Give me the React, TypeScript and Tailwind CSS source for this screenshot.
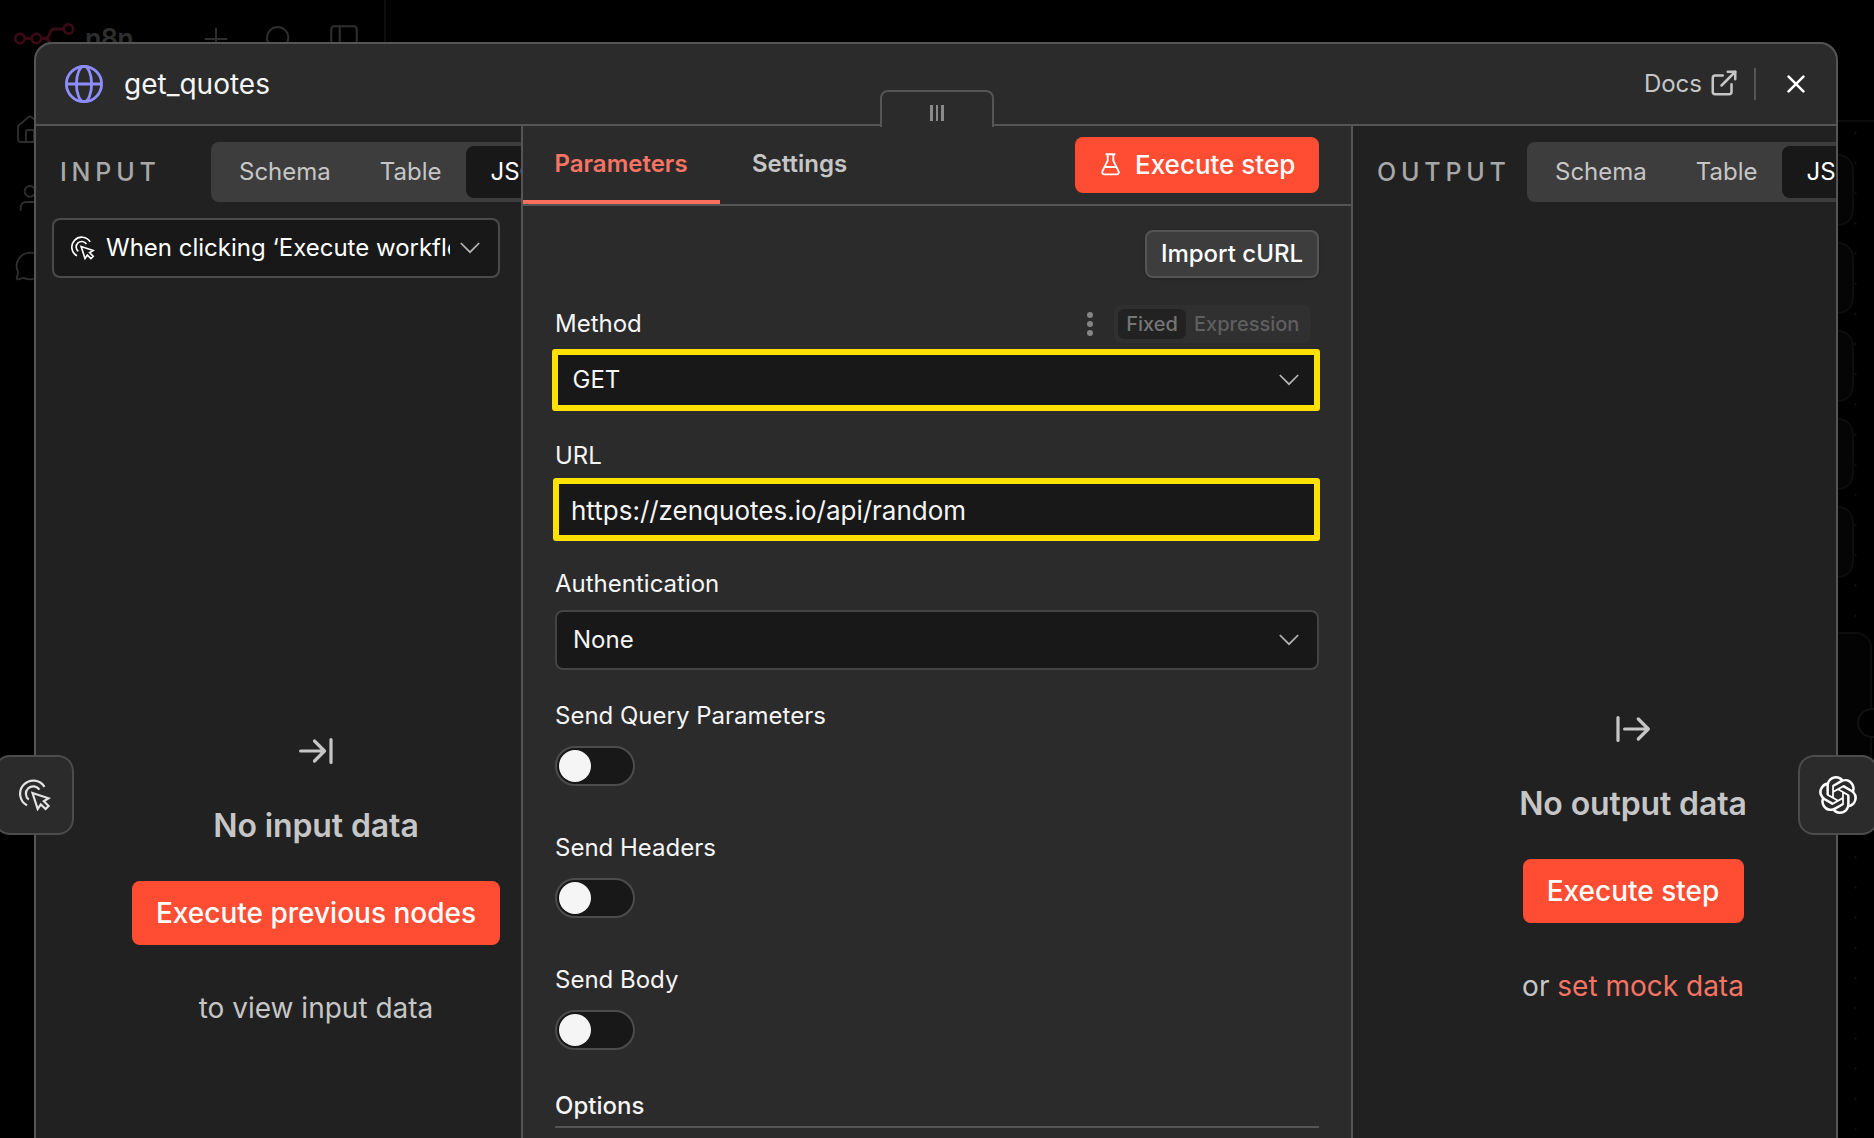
import type { ReactNode } from "react";
import { ExternalLink, House, MessageCircle, PanelLeft, Plus, Search, User } from "lucide-react";
import { SiOpenai } from "react-icons/si";

const canvasNodes = ["a", "b", "c", "d", "e"];

const switches = ["Send Query Parameters", "Send Headers", "Send Body"];

function ClickIcon({ className }: { className?: string }) {
  return (
    <svg viewBox="0 0 32 32" fill="none" stroke="currentColor" strokeWidth="2.2" className={className}>
      <path d="M8 26.4A13.2 13.2 0 1 1 25.5 7.8" />
      <path d="M9.8 20.6A7.4 7.4 0 1 1 20.5 10.7" />
      <path d="M13.5 14L29.6 19.3L24.8 22.3L29.6 27L26.6 30L21.8 25.4L18.7 30Z" />
    </svg>
  );
}

function GlobeIcon() {
  return (
    <svg viewBox="0 0 38 38" fill="none" stroke="#8d8dff" strokeWidth="2.8" className="h-[38px] w-[38px]">
      <circle cx="19" cy="19" r="17.6" />
      <ellipse cx="19" cy="19" rx="7.6" ry="17.6" />
      <path d="M1.4 19h35.2" />
    </svg>
  );
}

function ChevronIcon() {
  return (
    <svg viewBox="0 0 20 12" fill="none" stroke="#b5b5b5" strokeWidth="1.7" className="h-3 w-5 shrink-0">
      <path d="M.8 1L10 10.2L19.2 1" />
    </svg>
  );
}

function FlaskIcon() {
  return (
    <svg viewBox="0 0 19 23" fill="none" stroke="white" strokeWidth="1.9" className="h-[23px] w-[19px]">
      <path d="M6.7 1v6.6L1.6 17.8C.6 19.9 1.7 21.4 3.6 21.4h11.8c1.9 0 3-1.5 2-3.6L12.3 7.6V1M4.6 1.2h9.8M3.8 14h11.4" />
    </svg>
  );
}

function ArrowIcon({ direction }: { direction: "in" | "out" }) {
  return (
    <svg viewBox="0 0 34 26" fill="none" stroke="#c6c6c6" strokeWidth="3.2" strokeLinecap="round" strokeLinejoin="round" className="h-[26px] w-[34px]">
      {direction === "in" ? (
        <path d="M1.6 13h24M15.5 3l10 10l-10 10M32 1.6v22.8" />
      ) : (
        <path d="M8.6 13h23.6M22.3 3l10 10l-10 10M2 1.6v22.8" />
      )}
    </svg>
  );
}

function Logo() {
  return (
    <svg viewBox="0 0 62 34" fill="none" stroke="#3b0a17" strokeWidth="2.8" className="h-[34px] w-[62px]">
      <circle cx="6" cy="16.5" r="4.7" />
      <circle cx="22.5" cy="16.5" r="4.7" />
      <circle cx="54.5" cy="7" r="4.7" />
      <circle cx="47.5" cy="26" r="4.7" />
      <path d="M10.7 16.5h7M27.2 16.5h4c6 0 3-9.5 9-9.5h9.5M31.2 16.5c6 0 4 9.5 11.5 9.5" />
    </svg>
  );
}

function Background() {
  return (
    <div className="flex h-full w-full text-[#2e2e2e]">
      <aside className="h-full w-[386px] shrink-0 border-r-2 border-[#0d0d0d]">
        <div className="flex items-center pt-[21px] pl-[14px]">
          <Logo />
          <span className="ml-[9px] w-[110px] text-[27px] leading-[34px] font-semibold tracking-[-0.8px]">n8n</span>
          <Plus size={36} strokeWidth={1.4} className="mr-[29px] ml-[3px]" />
          <Search size={32} strokeWidth={1.5} className="mr-[32px]" />
          <PanelLeft size={34} strokeWidth={1.5} />
        </div>
        <div className="flex flex-col gap-9 pt-[57px] pl-[14px]">
          <House size={32} strokeWidth={1.4} />
          <User size={32} strokeWidth={1.4} />
          <MessageCircle size={32} strokeWidth={1.4} />
        </div>
      </aside>
      <main className="flex-1 bg-[radial-gradient(#101010_1px,transparent_1px)] bg-[size:30.2px_30.2px] bg-[position:5.3px_27.1px]">
        <div className="h-[122px] border-b-2 border-[#0b0b0b] bg-black"></div>
        <div className="flex flex-col gap-4 pt-8 pr-5">
          {canvasNodes.map((node) => (
            <div key={node} className="h-[72px] rounded-2xl border-2 border-[#0d0d0d] bg-[#050505]"></div>
          ))}
        </div>
        <div className="relative mt-[54px] mr-[2px] h-[180px] rounded-2xl border-2 border-[#0d0d0d] bg-[#030303]">
          <div className="absolute top-[74px] -right-[17px] h-[30px] w-[30px] rounded-full border-2 border-[#111] bg-black"></div>
        </div>
      </main>
    </div>
  );
}

function ViewTabs() {
  return (
    <div className="flex h-[60px] shrink-0 rounded-lg bg-[#3d3d3d] p-1 text-[24px] text-[#c6c6c6]">
      <span className="flex items-center pr-[25px] pl-6">Schema</span>
      <span className="flex items-center px-6">Table</span>
      <span className="flex items-center rounded-lg bg-[#181818] pr-6 pl-[25px] text-white">JSON</span>
    </div>
  );
}

function FieldLabel({ children }: { children: ReactNode }) {
  return <div className="flex h-[38px] items-center pt-[1px] text-[24px] text-[#f5f5f5]">{children}</div>;
}

function Toggle() {
  return (
    <div className="h-10 w-20 rounded-full border-2 border-[#4c4c4c] bg-[#181818] p-[2px]">
      <div className="h-8 w-8 rounded-full bg-[#f5f5f5]"></div>
    </div>
  );
}

function InputPanel() {
  return (
    <section className="w-[485px] shrink-0 overflow-hidden bg-[#212121]">
      <div className="flex items-center pt-4 pl-6">
        <span className="w-[151px] shrink-0 text-[25px] leading-[38px] font-medium tracking-[4.8px] text-[#a8a8a8]">INPUT</span>
        <ViewTabs />
      </div>
      <div className="mt-4 ml-4 flex h-[60px] w-[448px] items-center rounded-lg border-2 border-[#4a4a4a] bg-[#181818] pr-[18px] pl-[17px] text-white">
        <ClickIcon className="h-6 w-6 shrink-0" />
        <span className="ml-[11px] w-[344px] shrink-0 overflow-hidden text-[24px] whitespace-nowrap">
          When clicking ‘Execute workflow’
        </span>
        <span className="ml-[10px]">
          <ChevronIcon />
        </span>
      </div>
      <div className="flex flex-col items-center pt-[460px] pl-[75px] text-[#c6c6c6]">
        <ArrowIcon direction="in" />
        <div className="mt-[43px] text-[32px] leading-[38px] font-semibold tracking-[-0.12px]">No input data</div>
        <button className="mt-9 h-16 w-[368px] rounded-lg bg-[#ff4d33] text-[28px] font-medium text-white">
          Execute previous nodes
        </button>
        <div className="mt-11 text-[28px] leading-[38px]">to view input data</div>
      </div>
    </section>
  );
}

function OutputPanel() {
  return (
    <section className="flex-1 overflow-hidden bg-[#212121]">
      <div className="flex items-center pt-4 pl-6">
        <span className="w-[150px] shrink-0 text-[25px] leading-[38px] font-medium tracking-[4.8px] text-[#a8a8a8]">OUTPUT</span>
        <ViewTabs />
      </div>
      <div className="flex flex-col items-center pt-[514px] pl-[77px] text-[#c6c6c6]">
        <ArrowIcon direction="out" />
        <div className="mt-[43px] text-[32px] leading-[38px] font-semibold tracking-[-0.12px]">No output data</div>
        <button className="mt-9 h-16 w-[221px] rounded-lg bg-[#ff4d33] text-[28px] font-medium text-white">
          Execute step
        </button>
        <div className="mt-11 text-[28px] leading-[38px]">
          or <span className="text-[#f77464]">set mock data</span>
        </div>
      </div>
    </section>
  );
}

function ParametersPanel() {
  return (
    <section className="relative w-[832px] shrink-0 border-x-2 border-[#555] bg-[#2b2b2b]">
      {/* drag handle sits on top of the header line */}
      <div className="absolute -top-[36px] left-[357px] flex h-[37px] w-[114px] items-center justify-center gap-[3px] rounded-t-lg border-2 border-b-0 border-[#555] bg-[#2b2b2b] pt-[7px]">
        <span className="h-4 w-[3px] bg-[#8a8a8a]"></span>
        <span className="h-4 w-[2px] bg-[#8a8a8a]"></span>
        <span className="h-4 w-[3px] bg-[#8a8a8a]"></span>
      </div>
      <div className="flex h-20 items-start border-b-2 border-[#555] pr-8 text-[24px] font-semibold">
        <div className="h-[78px] w-[197px] border-b-4 border-[#ff6f5c] pt-[19px] pl-[31.5px] leading-[38px] text-[#f77464]">
          Parameters
        </div>
        <div className="pt-[19px] pl-8 leading-[38px] text-[#c6c6c6]">Settings</div>
        <button className="mt-[11px] ml-auto flex h-14 w-[244px] items-center gap-[15px] rounded-lg bg-[#ff4d33] pb-[1px] pl-[26px] text-[26px] font-medium text-white">
          <FlaskIcon />
          Execute step
        </button>
      </div>
      <div className="pt-6 pr-8 pl-8">
        <button className="ml-auto block h-12 w-[174px] rounded-lg border-2 border-[#555] bg-[#3d3d3d] text-[24px] font-medium text-white shadow-sm">
          Import cURL
        </button>
        <div className="mt-[27px] flex h-[38px] items-center">
          <span className="text-[24px] leading-[38px] text-[#f5f5f5]">Method</span>
          <div className="mr-[21px] ml-auto flex flex-col gap-[3px]">
            <span className="h-[6px] w-[6px] rounded-full bg-[#858585]"></span>
            <span className="h-[6px] w-[6px] rounded-full bg-[#858585]"></span>
            <span className="h-[6px] w-[6px] rounded-full bg-[#858585]"></span>
          </div>
          <div className="mr-2 flex h-[38px] w-[197px] items-center rounded-lg bg-[#303030] p-1 text-[20px] font-medium">
            <span className="flex h-[30px] w-[68px] items-center justify-center rounded-md bg-[#222] text-[#757575]">Fixed</span>
            <span className="ml-2 text-[#5f5f5f]">Expression</span>
          </div>
        </div>
        <div className="mt-[6px] -mr-[1px] -ml-[3px] flex h-[62px] items-center justify-between rounded-[3px] border-[6px] border-[#ffe100] bg-[#181818] pr-[15px] pl-[14.5px] text-[24px] text-[#f5f5f5]">
          GET
          <ChevronIcon />
        </div>
        <div className="mt-[25px]">
          <FieldLabel>URL</FieldLabel>
        </div>
        <div className="mt-1 -mr-[1px] -ml-[2px] flex h-[63px] items-center rounded-[3px] border-[6px] border-[#ffe100] bg-[#181818] pt-[1px] pl-3 text-[26px] text-[#f5f5f5]">
          https://zenquotes.io/api/random
        </div>
        <div className="mt-[23px]">
          <FieldLabel>Authentication</FieldLabel>
        </div>
        <div className="mt-2 flex h-[60px] items-center justify-between rounded-lg border-2 border-[#444] bg-[#181818] pr-[18px] pl-4 text-[24px] text-[#f5f5f5]">
          None
          <ChevronIcon />
        </div>
        <div className="mt-[26px] flex flex-col gap-[42px]">
          {switches.map((name) => (
            <div key={name} className="flex flex-col gap-3">
              <FieldLabel>{name}</FieldLabel>
              <Toggle />
            </div>
          ))}
        </div>
        <div className="mt-9 flex h-[42px] items-center border-b-2 border-[#555] text-[24px] font-medium text-[#f5f5f5]">
          Options
        </div>
      </div>
    </section>
  );
}

export default function App() {
  return (
    <div className="relative h-[1138px] w-[1874px] overflow-hidden bg-black font-['Inter',sans-serif]">
      <Background />
      <div className="absolute top-[42px] left-[34px] flex h-[1120px] w-[1804px] flex-col overflow-hidden rounded-t-[18px] border-2 border-[#555] bg-[#2b2b2b]">
        <header className="flex h-[82px] shrink-0 items-center border-b-2 border-[#555] pr-[31px] pl-[29px]">
          <GlobeIcon />
          <h1 className="ml-[21px] text-[28px] text-[#f5f5f5]">get_quotes</h1>
          <span className="ml-auto text-[24px] text-[#c6c6c6]">Docs</span>
          <ExternalLink size={30} strokeWidth={2} className="-mt-[2px] ml-[7px] text-[#c6c6c6]" />
          <span className="ml-[15px] h-8 w-[2px] bg-[#555]"></span>
          <svg viewBox="0 0 18 18" fill="none" stroke="white" strokeWidth="2.6" strokeLinecap="round" className="ml-[31px] h-[18px] w-[18px]">
            <path d="M1.6 1.6l14.8 14.8M16.4 1.6l-14.8 14.8" />
          </svg>
        </header>
        <div className="flex min-h-0 flex-1">
          <InputPanel />
          <ParametersPanel />
          <OutputPanel />
        </div>
      </div>
      {/* neighbouring nodes */}
      <div className="absolute top-[755px] -left-[6px] flex h-20 w-20 items-center justify-center rounded-2xl border-2 border-[#4c4c4c] bg-[#2b2b2b] pl-[2px] text-[#e4e4e4]">
        <ClickIcon className="h-8 w-8" />
      </div>
      <div className="absolute top-[755px] left-[1798px] flex h-20 w-20 items-center justify-center rounded-2xl border-2 border-[#4c4c4c] bg-[#2b2b2b] text-white">
        <SiOpenai size={38} />
      </div>
    </div>
  );
}
